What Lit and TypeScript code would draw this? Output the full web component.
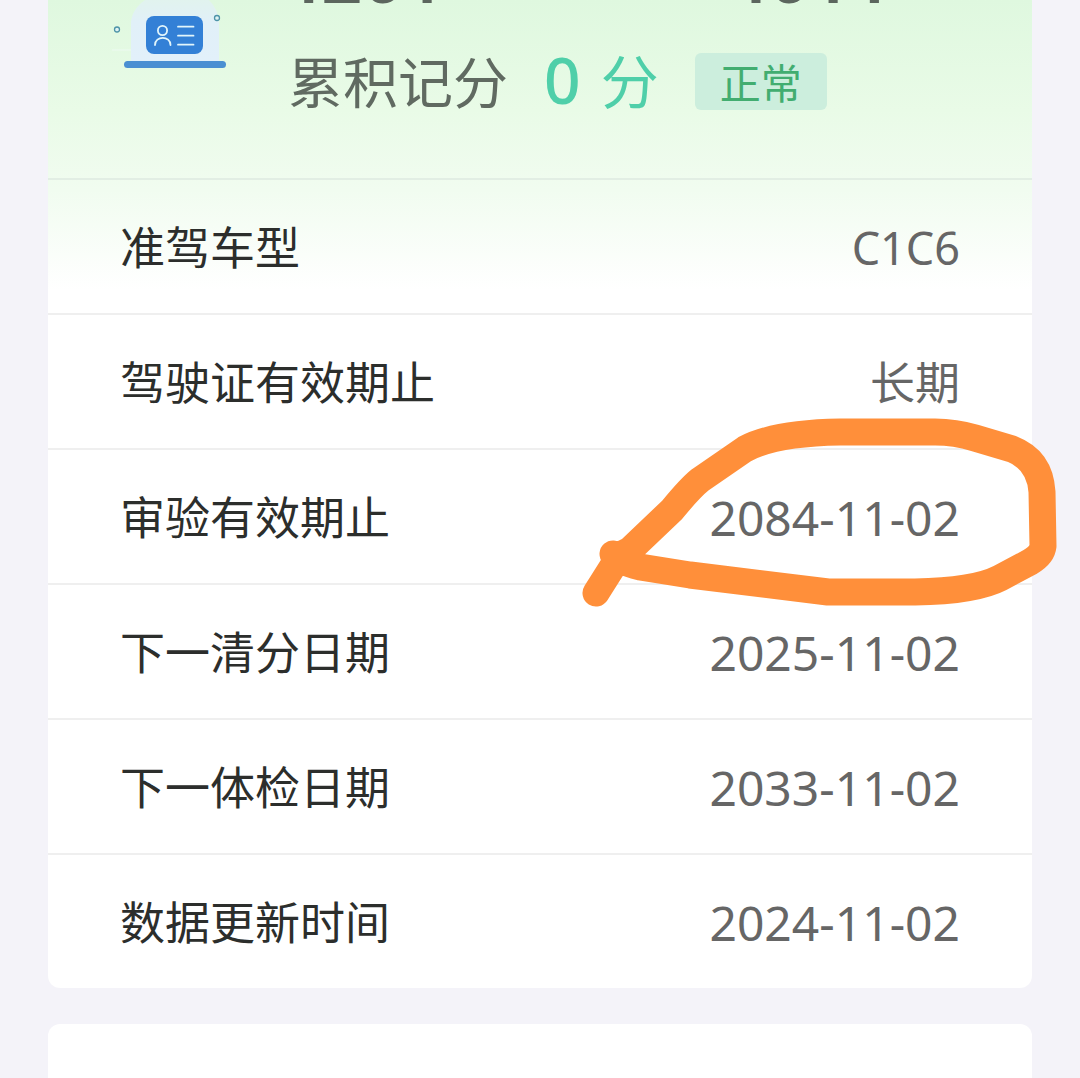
import { LitElement, html, css } from "lit";
import { customElement } from "lit/decorators.js";

interface Row {
  label: string;
  value: string;
  kind: "text" | "date";
}

const ROWS: Row[] = [
  { label: "准驾车型", value: "C1C6", kind: "text" },
  { label: "驾驶证有效期止", value: "长期", kind: "text" },
  { label: "审验有效期止", value: "2084-11-02", kind: "date" },
  { label: "下一清分日期", value: "2025-11-02", kind: "date" },
  { label: "下一体检日期", value: "2033-11-02", kind: "date" },
  { label: "数据更新时间", value: "2024-11-02", kind: "date" },
];

@customElement("licence-icon")
class LicenceIcon extends LitElement {
  static styles = css`
    :host { display: block; }
    .icon { display: block; width: 120px; height: 76px; }
  `;

  render() {
    return html`
      <svg class="icon" viewBox="108 0 120 76" aria-hidden="true">
        <defs>
          <linearGradient id="glow" x1="0" y1="0" x2="0" y2="1">
            <stop offset="0" stop-color="#e1f3ee" />
            <stop offset="0.35" stop-color="#e1f0f8" />
            <stop offset="1" stop-color="#e2f0fa" />
          </linearGradient>
        </defs>
        <path d="M131 62V24Q131 10 145 0H209Q219 10 219 24V62Z" fill="url(#glow)" />
        <path d="M112 50H131" stroke="#edfaf2" stroke-width="1" />
        <rect x="124" y="61" width="102" height="7" rx="3.5" fill="#4a8fd2" />
        <rect x="146" y="16" width="57" height="38" rx="8" fill="#3380d6" />
        <g fill="none" stroke="#e2f5fb" stroke-width="1.8" stroke-linecap="round">
          <circle cx="162.500" cy="30.500" r="4.600" />
          <path d="M155 45C155 35.500 170.500 35.500 170.500 45" />
          <path d="M178 26.700H193.500M178 35.700H193.500M178 44.700H193.500" />
        </g>
        <g fill="#dff3f2" stroke="#4d93a8" stroke-width="1.300">
          <circle cx="117" cy="29.500" r="2.500" />
          <circle cx="217" cy="18" r="2.500" />
        </g>
      </svg>
    `;
  }
}

@customElement("app-root")
class AppRoot extends LitElement {
  static styles = css`
    :host {
      display: block;
      min-height: 100vh;
      overflow: hidden;
      background: #f4f3f9;
      font-family: "Noto Sans", "Noto Sans CJK SC", sans-serif;
      color: #666;
    }
    .page {
      position: relative;
      display: flex;
      flex-direction: column;
      gap: 36px;
      min-height: 100vh;
      padding: 0 48px;
      box-sizing: border-box;
    }
    .card {
      background: linear-gradient(#dff8df 0, #e9fbe7 110px, #f1fcf0 190px, #fff 290px) #fff;
      border-radius: 0 0 12px 12px;
    }
    .summary {
      display: flex;
      height: 178px;
      padding: 0 60px;
      border-bottom: 2px solid #e2eee4;
    }
    .info {
      flex: 1;
      display: flex;
      flex-direction: column;
      margin-left: 60px;
    }
    .number {
      display: flex;
      align-items: flex-end;
      justify-content: space-between;
      height: 4px;
      padding: 0 80px 0 0;
      margin-left: -8px;
      font-size: 72px;
      line-height: 58px;
      font-weight: 600;
      color: #5c665e;
    }
    .score {
      display: flex;
      align-items: center;
      margin-top: 35px;
      height: 80px;
      font-family: "Noto Sans CJK SC", sans-serif;
      font-size: 55px;
      white-space: nowrap;
      color: #606a61;
    }
    .points {
      display: flex;
      align-items: center;
      gap: 20px;
      margin: 0 36px;
      font-size: 58px;
      color: #4fcfa9;
    }
    .zero {
      font-family: "Noto Sans", sans-serif;
      font-size: 64px;
      font-weight: 500;
    }
    .badge {
      margin-top: 4px;
      padding: 0 25px;
      border-radius: 6px;
      background: #cceedd;
      color: #42ad70;
      font-size: 41px;
      line-height: 57px;
    }
    .rows { margin: 0; }
    .row {
      display: flex;
      align-items: center;
      justify-content: space-between;
      height: 133px;
      padding: 0 72px;
      border-bottom: 2px solid #efefef;
    }
    .row:last-child { border-bottom: 0; }
    .label, .value { margin: 0; font-size: 45px; line-height: 64px; }
    .label {
      padding-bottom: 2px;
      color: #2c2e2c;
      font-family: "Noto Sans CJK SC", sans-serif;
    }
    .value { padding-top: 2px; }
    .date { font-size: 48px; }
    .next {
      flex: 1;
      background: #fff;
      border-radius: 12px 12px 0 0;
    }
    .mark {
      position: absolute;
      top: 410px;
      right: 16px;
      width: 490px;
      height: 204px;
      pointer-events: none;
    }
  `;

  render() {
    return html`
      <main class="page">
        <section class="card">
          <header class="summary">
            <licence-icon></licence-icon>
            <div class="info">
              <div class="number"><span>4201</span><span>4011</span></div>
              <div class="score">
                <span>累积记分</span>
                <span class="points"><span class="zero">0</span><span>分</span></span>
                <span class="badge">正常</span>
              </div>
            </div>
          </header>
          <dl class="rows">
            ${ROWS.map(
              (row) => html`
                <div class="row">
                  <dt class="label">${row.label}</dt>
                  <dd class="value ${row.kind}">${row.value}</dd>
                </div>
              `
            )}
          </dl>
        </section>
        <section class="next"></section>
        <svg class="mark" viewBox="574 410 490 204" aria-hidden="true">
          <path
            d="M596 593L620 555L630 550L672 510Q690 488 700 480L745 449Q775 433 840 432H935Q955 432 975 438L1012 449Q1040 460 1042 492L1043 546Q1042 555 1030 562L1000 578Q975 591 915 592H828L690 575L640 567Q620 562 613 554"
            fill="none" stroke="#ff8f3a" stroke-width="27" stroke-linecap="round" stroke-linejoin="round" />
        </svg>
      </main>
    `;
  }
}
